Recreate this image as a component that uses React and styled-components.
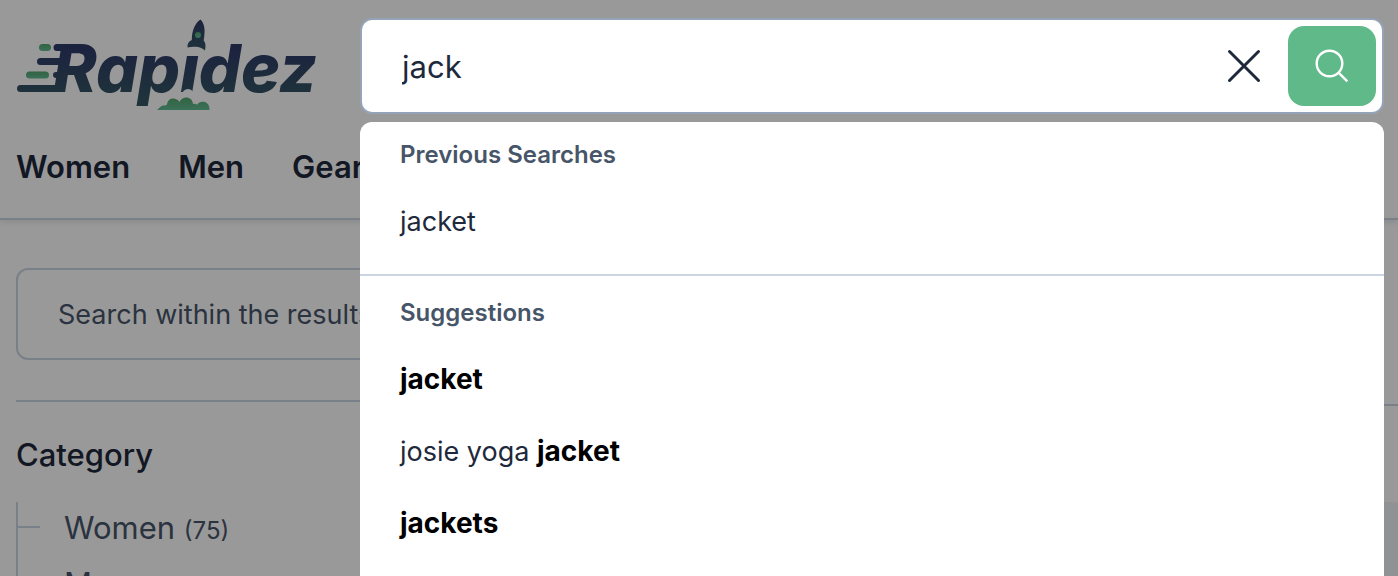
import React, { useState } from 'react'
import styled, { createGlobalStyle } from 'styled-components'

const GlobalStyle = createGlobalStyle`
    * {
        box-sizing: border-box;
    }
    body {
        margin: 0;
        overflow: hidden;
        background-color: white;
        color: #1e293b;
        font-family: Inter, "Liberation Sans", sans-serif;
    }
    ul {
        list-style: none;
        margin: 0;
        padding: 0;
    }
    a {
        color: inherit;
        text-decoration: none;
    }
    input, button {
        font-family: inherit;
    }
`
const Page = styled.div`
    height: 100vh;
    overflow: hidden;
`
const Header = styled.header`
    border-bottom: 2px solid #cbd5e1;
    box-shadow: 0 2px 6px rgba(0, 0, 0, 0.1);
`
const Top = styled.div`
    display: flex;
    gap: 44px;
    padding: 18px 14px 0 16px;
`
const LogoLink = styled.a`
    flex: none;
    width: 300px;
    height: 96px;
`
const LogoSvg = styled.svg`
    display: block;
    overflow: visible;
`
const LogoText = styled.text`
    font-family: Inter, "Liberation Sans", sans-serif;
    font-size: 66px;
    font-weight: 800;
    font-style: italic;
`
const Overlay = styled.div`
    position: fixed;
    inset: 0;
    z-index: 10;
    background-color: rgba(0, 0, 0, 0.4);
`
const Search = styled.div`
    flex: 1;
    position: relative;
    z-index: 20;
`
const SearchForm = styled.form`
    display: flex;
    align-items: center;
    height: 96px;
    padding: 6px;
    border: 2px solid #94a3b8;
    border-radius: 12px;
    background-color: white;
`
const SearchInput = styled.input`
    flex: 1;
    min-width: 0;
    padding: 2px 34px 0;
    border: none;
    outline: none;
    background: transparent;
    color: #1e293b;
    font-size: 31px;
    line-height: 40px;
`
const ClearButton = styled.button`
    display: flex;
    align-items: center;
    justify-content: center;
    width: 88px;
    height: 80px;
    padding: 0;
    border: none;
    background: transparent;
    color: #1e293b;
    cursor: pointer;
`
const SubmitButton = styled.button`
    display: flex;
    align-items: center;
    justify-content: center;
    width: 88px;
    height: 80px;
    padding: 0;
    border: none;
    border-radius: 16px;
    background-color: #5fb989;
    color: white;
    cursor: pointer;
`
const Dropdown = styled.div`
    position: absolute;
    top: 104px;
    left: 0;
    right: 0;
    min-height: 100vh;
    border-radius: 12px;
    background-color: white;
`
const Section = styled.section`
    padding: ${props => props.$divided ? "21px" : "17px"} 0 16px;
    border-top: ${props => props.$divided && "2px solid #cbd5e1"};
`
const SectionTitle = styled.h2`
    margin: 0 0 15px;
    padding: 0 40px;
    color: #475569;
    font-size: 24px;
    font-weight: 600;
    line-height: 32px;
`
const ResultLink = styled.a`
    display: block;
    padding: 20px 40px;
    color: #1e293b;
    font-size: 27px;
    line-height: 32px;
    strong {
        color: black;
        font-size: 28px;
        font-weight: 700;
        line-height: 1;
    }
`
const Nav = styled.nav`
    display: flex;
    align-items: center;
    gap: 48px;
    height: 104px;
    padding: 2px 16px 0;
`
const NavLink = styled.a`
    color: #1e293b;
    font-size: 31px;
    font-weight: 600;
    line-height: 40px;
`
const Content = styled.div`
    display: flex;
    gap: 48px;
    padding: 48px 0 0 16px;
`
const Sidebar = styled.aside`
    flex: none;
    width: 30%;
`
const FilterInput = styled.input`
    display: block;
    width: 100%;
    height: 92px;
    padding: 0 40px;
    border: 2px solid #cbd5e1;
    border-radius: 12px;
    background-color: white;
    font-size: 27px;
    &::placeholder {
        color: #475569;
        opacity: 1;
    }
`
const Filter = styled.div`
    margin-top: 40px;
    padding-top: 33px;
    border-top: 2px solid #cbd5e1;
`
const FilterTitle = styled.h3`
    margin: 0 0 27px;
    font-size: 31px;
    font-weight: 500;
    line-height: 40px;
`
const Tree = styled.ul`
    && {
        border-left: 2px solid #cbd5e1;
    }
`
const TreeItem = styled.li`
    display: flex;
    align-items: center;
    gap: 24px;
    height: 50px;
    margin-bottom: 6px;
    color: #475569;
    font-size: 31px;
    &::before {
        content: "";
        width: 22px;
        height: 2px;
        background-color: #cbd5e1;
    }
`
const Count = styled.small`
    font-size: 24px;
`
const Main = styled.main`
    flex: 1;
`
const Toolbar = styled.div`
    height: 138px;
    border-bottom: 2px solid #cbd5e1;
`
const ProductCard = styled.div`
    height: 400px;
    margin-top: 96px;
    background-color: #f1f3f6;
`

const Logo = () => {
    return (
        <LogoSvg width="300" height="92" viewBox="16 18 300 92" role="img" aria-label="Rapidez">
            <defs>
                <linearGradient id="navy" gradientUnits="userSpaceOnUse" x1="0" y1="44" x2="0" y2="100">
                    <stop offset="0.1" stopColor="#303b6a" />
                    <stop offset="1" stopColor="#335762" />
                </linearGradient>
                <linearGradient id="rocket" x1="0" y1="0" x2="0" y2="1">
                    <stop offset="0" stopColor="#303b6a" />
                    <stop offset="1" stopColor="#335762" />
                </linearGradient>
                <linearGradient id="green" x1="0" y1="0" x2="0" y2="1">
                    <stop offset="0" stopColor="#54a66c" />
                    <stop offset="1" stopColor="#63bd96" />
                </linearGradient>
                {/* leaves room for the rocket above the i and the blast below it */}
                <mask id="launch" maskUnits="userSpaceOnUse" x="0" y="0" width="340" height="130">
                    <rect width="340" height="130" fill="white" />
                    <path d="M180 30h26v23h-26z" fill="black" />
                    <circle cx="188" cy="95" r="6" fill="black" />
                </mask>
            </defs>
            <g fill="url(#navy)">
                <g mask="url(#launch)">
                    <LogoText x="53" y="92">Rapidez</LogoText>
                </g>
                <path d="M57 44h13l-2 14h-2.500a3.500 3.500 0 0 0 0-7H57a3.500 3.500 0 0 1 0-7z" />
                <path d="M40.500 58H67l-2 14h-3a3.500 3.500 0 0 0 0-7H40.500a3.500 3.500 0 0 1 0-7z" />
                <path d="M56 72h11l-3 20H20.500a3.500 3.500 0 0 1 0-7H58a3.500 3.500 0 0 0 0-7h-2a3 3 0 0 1 0-6z" />
            </g>
            <path
                d="M200.500 19.500c3 3 4.500 8 4 13.500-.2 2.500-.3 5-.8 7.500 1.800 2 2.300 5.500 1.300 10-2-2-4.500-3-7-3.500-3.500-.6-7-.5-10.500.5-.3-3.500 1-6 4.300-7.500 0-9 3-17 8.700-20.500z"
                fill="url(#rocket)"
            />
            <circle cx="198" cy="35" r="3" fill="url(#green)" />
            <rect x="39" y="44" width="12" height="7" rx="3.500" fill="url(#green)" />
            <rect x="26" y="71.500" width="23" height="7" rx="3.500" fill="url(#green)" />
            <path d="M157 110c2-1.500 3-4 6-4.500 1.500 0 3 0 4-1 1-8 10-7 12.500-2.500 2.500-6.500 13-6 13.500 2 1.500-.5 3-.2 4 .8 3-5 13-4 12.500 5.200z" fill="url(#green)" />
        </LogoSvg>
    )
}

const SearchBar = () => {
    const [query, setQuery] = useState("jack")
    return (
        <Search>
            <SearchForm role="search" onSubmit={e => e.preventDefault()}>
                <SearchInput
                    aria-label="Search"
                    value={query}
                    onChange={e => setQuery(e.target.value)}
                />
                <ClearButton type="button" aria-label="Clear" onClick={() => setQuery("")}>
                    <svg width="34" height="34" viewBox="0 0 34 34" fill="none" stroke="currentColor" strokeWidth="3" strokeLinecap="round">
                        <path d="M2.500 2.500l29 29M31.500 2.500l-29 29" />
                    </svg>
                </ClearButton>
                <SubmitButton type="submit" aria-label="Search">
                    <svg width="34" height="34" viewBox="0 0 34 34" fill="none" stroke="currentColor" strokeWidth="2.400">
                        <circle cx="14.500" cy="14.500" r="12.800" />
                        <path d="M23.800 23.800l8.500 8.500" />
                    </svg>
                </SubmitButton>
            </SearchForm>
            <Dropdown>
                <Section>
                    <SectionTitle>Previous Searches</SectionTitle>
                    <ul>
                        <li><ResultLink href="#">jacket</ResultLink></li>
                    </ul>
                </Section>
                <Section $divided>
                    <SectionTitle>Suggestions</SectionTitle>
                    <ul>
                        <li><ResultLink href="#"><strong>jacket</strong></ResultLink></li>
                        <li><ResultLink href="#">josie yoga <strong>jacket</strong></ResultLink></li>
                        <li><ResultLink href="#"><strong>jackets</strong></ResultLink></li>
                    </ul>
                </Section>
            </Dropdown>
        </Search>
    )
}

const App = () => {
    return (
        <Page>
            <GlobalStyle />
            <Header>
                <Top>
                    <LogoLink href="#"><Logo /></LogoLink>
                    <SearchBar />
                </Top>
                <Nav>
                    <NavLink href="#">Women</NavLink>
                    <NavLink href="#">Men</NavLink>
                    <NavLink href="#">Gear</NavLink>
                </Nav>
            </Header>
            <Content>
                <Sidebar>
                    <FilterInput aria-label="Search within the results" placeholder="Search within the results" />
                    <Filter>
                        <FilterTitle>Category</FilterTitle>
                        <Tree>
                            <TreeItem><span>Women <Count>(75)</Count></span></TreeItem>
                            <TreeItem><span>Men</span></TreeItem>
                        </Tree>
                    </Filter>
                </Sidebar>
                <Main>
                    <Toolbar />
                    <ProductCard />
                </Main>
            </Content>
            <Overlay />
        </Page>
    )
}

export default App
